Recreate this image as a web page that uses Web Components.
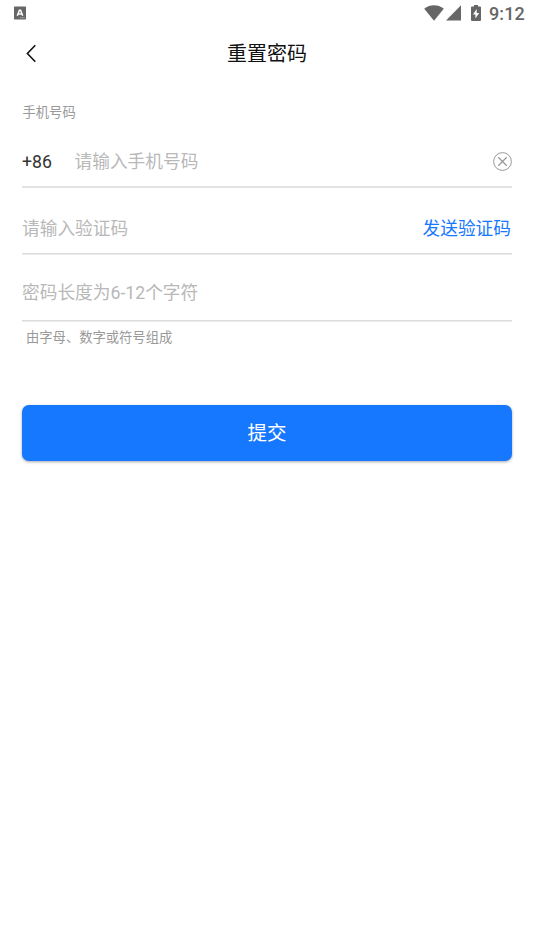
<!DOCTYPE html>
<html lang="zh-CN">
<head>
<meta charset="utf-8">
<title>重置密码</title>
<style>
html,body{margin:0;height:100%;background:#fff;overflow:hidden}
body{font-family:Roboto,"Noto Sans CJK SC",sans-serif;color:#111}
</style>
</head>
<body>
<reset-page></reset-page>
<script>
class Base extends HTMLElement {
  constructor() {
    super();
    this.attachShadow({ mode: 'open' }).innerHTML = this.constructor.html;
  }
}

class StatusBar extends Base {
  static html = `<style>
    :host{display:flex;align-items:center;height:27px;padding:0 9px 2px 14px;box-sizing:border-box;color:#666}
    svg{display:block;flex:none}
    .gap{flex:1}
    .time{font-size:18px;line-height:25px;font-weight:500;margin-left:8px;letter-spacing:.15px;padding-top:1px}
  </style>
  <svg width="12" height="14" viewBox="0 0 12 14"><rect y=".6" width="12" height="12.8" rx=".6" fill="#666"/><path d="M3.3 9.700 5.400 4.300h1.200l2.100 5.400M4.200 7.900h3.600" fill="none" stroke="#fff" stroke-width="1.500"/><path d="M6 11.800h4.600" stroke="#ccc" stroke-width=".8" stroke-dasharray="1.2 .5"/></svg>
  <span class="gap"></span>
  <svg width="20" height="16" viewBox="0 0 20 16"><path d="M.2 3.7C6-.9 14-.9 19.8 3.7L10 15.7Z" fill="#666"/></svg>
  <svg style="margin-left:2px" width="15" height="16" viewBox="0 0 15 16"><path d="M15 .2V15.6H0Z" fill="#666"/></svg>
  <svg style="margin-left:10px" width="10" height="16" viewBox="0 0 10 16"><path d="M3 0h4v1.5h2q1 0 1 1V15q0 1-1 1H1q-1 0-1-1V2.500q0-1 1-1h2Z" fill="#666"/><path d="M5.700 4 2 9.400h2.400V13.500L8.200 8H5.700Z" fill="#fff"/></svg>
  <span class="time">9:12</span>`;
}

class NavBar extends Base {
  static html = `<style>
    :host{display:grid;grid-template-columns:60px 1fr 60px;align-items:center;height:53px}
    svg{display:block;margin-left:26px}
    .title{text-align:center;font-size:20px;line-height:30px;color:#111}
  </style>
  <svg width="11" height="20" viewBox="0 0 11 20"><path d="M9.300 1.200 1.400 9.500l7.900 8.300" fill="none" stroke="#111" stroke-width="1.600"/></svg>
  <span class="title"><slot></slot></span>`;
}

class FieldRow extends Base {
  static html = `<style>
    :host{display:flex;align-items:center;height:66px;box-sizing:border-box;margin-bottom:1px;border-bottom:1px solid #dcdcdc;box-shadow:0 1px #ebebeb;font-size:17.700px;line-height:26px;color:#b8b8b8}
    .hint{flex:1;white-space:nowrap}
    ::slotted([slot=prefix]){width:52.500px;color:#333}
    ::slotted([slot=action]){color:#1677ff}
  </style>
  <slot name="prefix"></slot><span class="hint"><slot></slot></span><slot name="action"></slot>`;
}

class ClearIcon extends Base {
  static html = `<style>:host{display:block}svg{display:block}</style>
  <svg width="19" height="19" viewBox="0 0 19 19" fill="none" stroke="#999"><circle cx="9.500" cy="9.500" r="8.900"/><path d="m5.300 5.300 8.400 8.400m0-8.400-8.400 8.400" stroke-width="1.300"/></svg>`;
}

class SubmitButton extends Base {
  static html = `<style>
    :host{display:block}
    button{display:block;width:100%;height:56px;padding:0;border:0;border-radius:7px;background:#1677ff;color:#fff;font:inherit;font-size:19.500px;line-height:57px;box-shadow:0 1px 3px rgba(0,0,0,.35)}
  </style><button><slot></slot></button>`;
}

class ResetPage extends Base {
  static html = `<style>
    :host{display:block;height:100vh;background:#fff}
    main{padding:23px 22px 0}
    .label,.note{font-size:13.300px;line-height:20px;color:#999}
    .label{padding-left:.5px}
    .note{padding:6px 4px 0}
    .phone{height:64px;padding-top:14px;border-color:#e3e3e3;box-shadow:0 1px #e3e3e3}
    .code{padding-top:16px}
    .code span{margin-right:1px}
    .pwd{padding:16px 0 6px}
    submit-button{margin-top:57px}
  </style>
  <status-bar></status-bar>
  <nav-bar>重置密码</nav-bar>
  <main>
    <div class="label">手机号码</div>
    <field-row class="phone"><span slot="prefix">+86</span>请输入手机号码<clear-icon slot="action"></clear-icon></field-row>
    <field-row class="code">请输入验证码<span slot="action">发送验证码</span></field-row>
    <field-row class="pwd">密码长度为6-12个字符</field-row>
    <div class="note">由字母、数字或符号组成</div>
    <submit-button>提交</submit-button>
  </main>`;
}

customElements.define('status-bar', StatusBar);
customElements.define('nav-bar', NavBar);
customElements.define('field-row', FieldRow);
customElements.define('clear-icon', ClearIcon);
customElements.define('submit-button', SubmitButton);
customElements.define('reset-page', ResetPage);
</script>
</body>
</html>
